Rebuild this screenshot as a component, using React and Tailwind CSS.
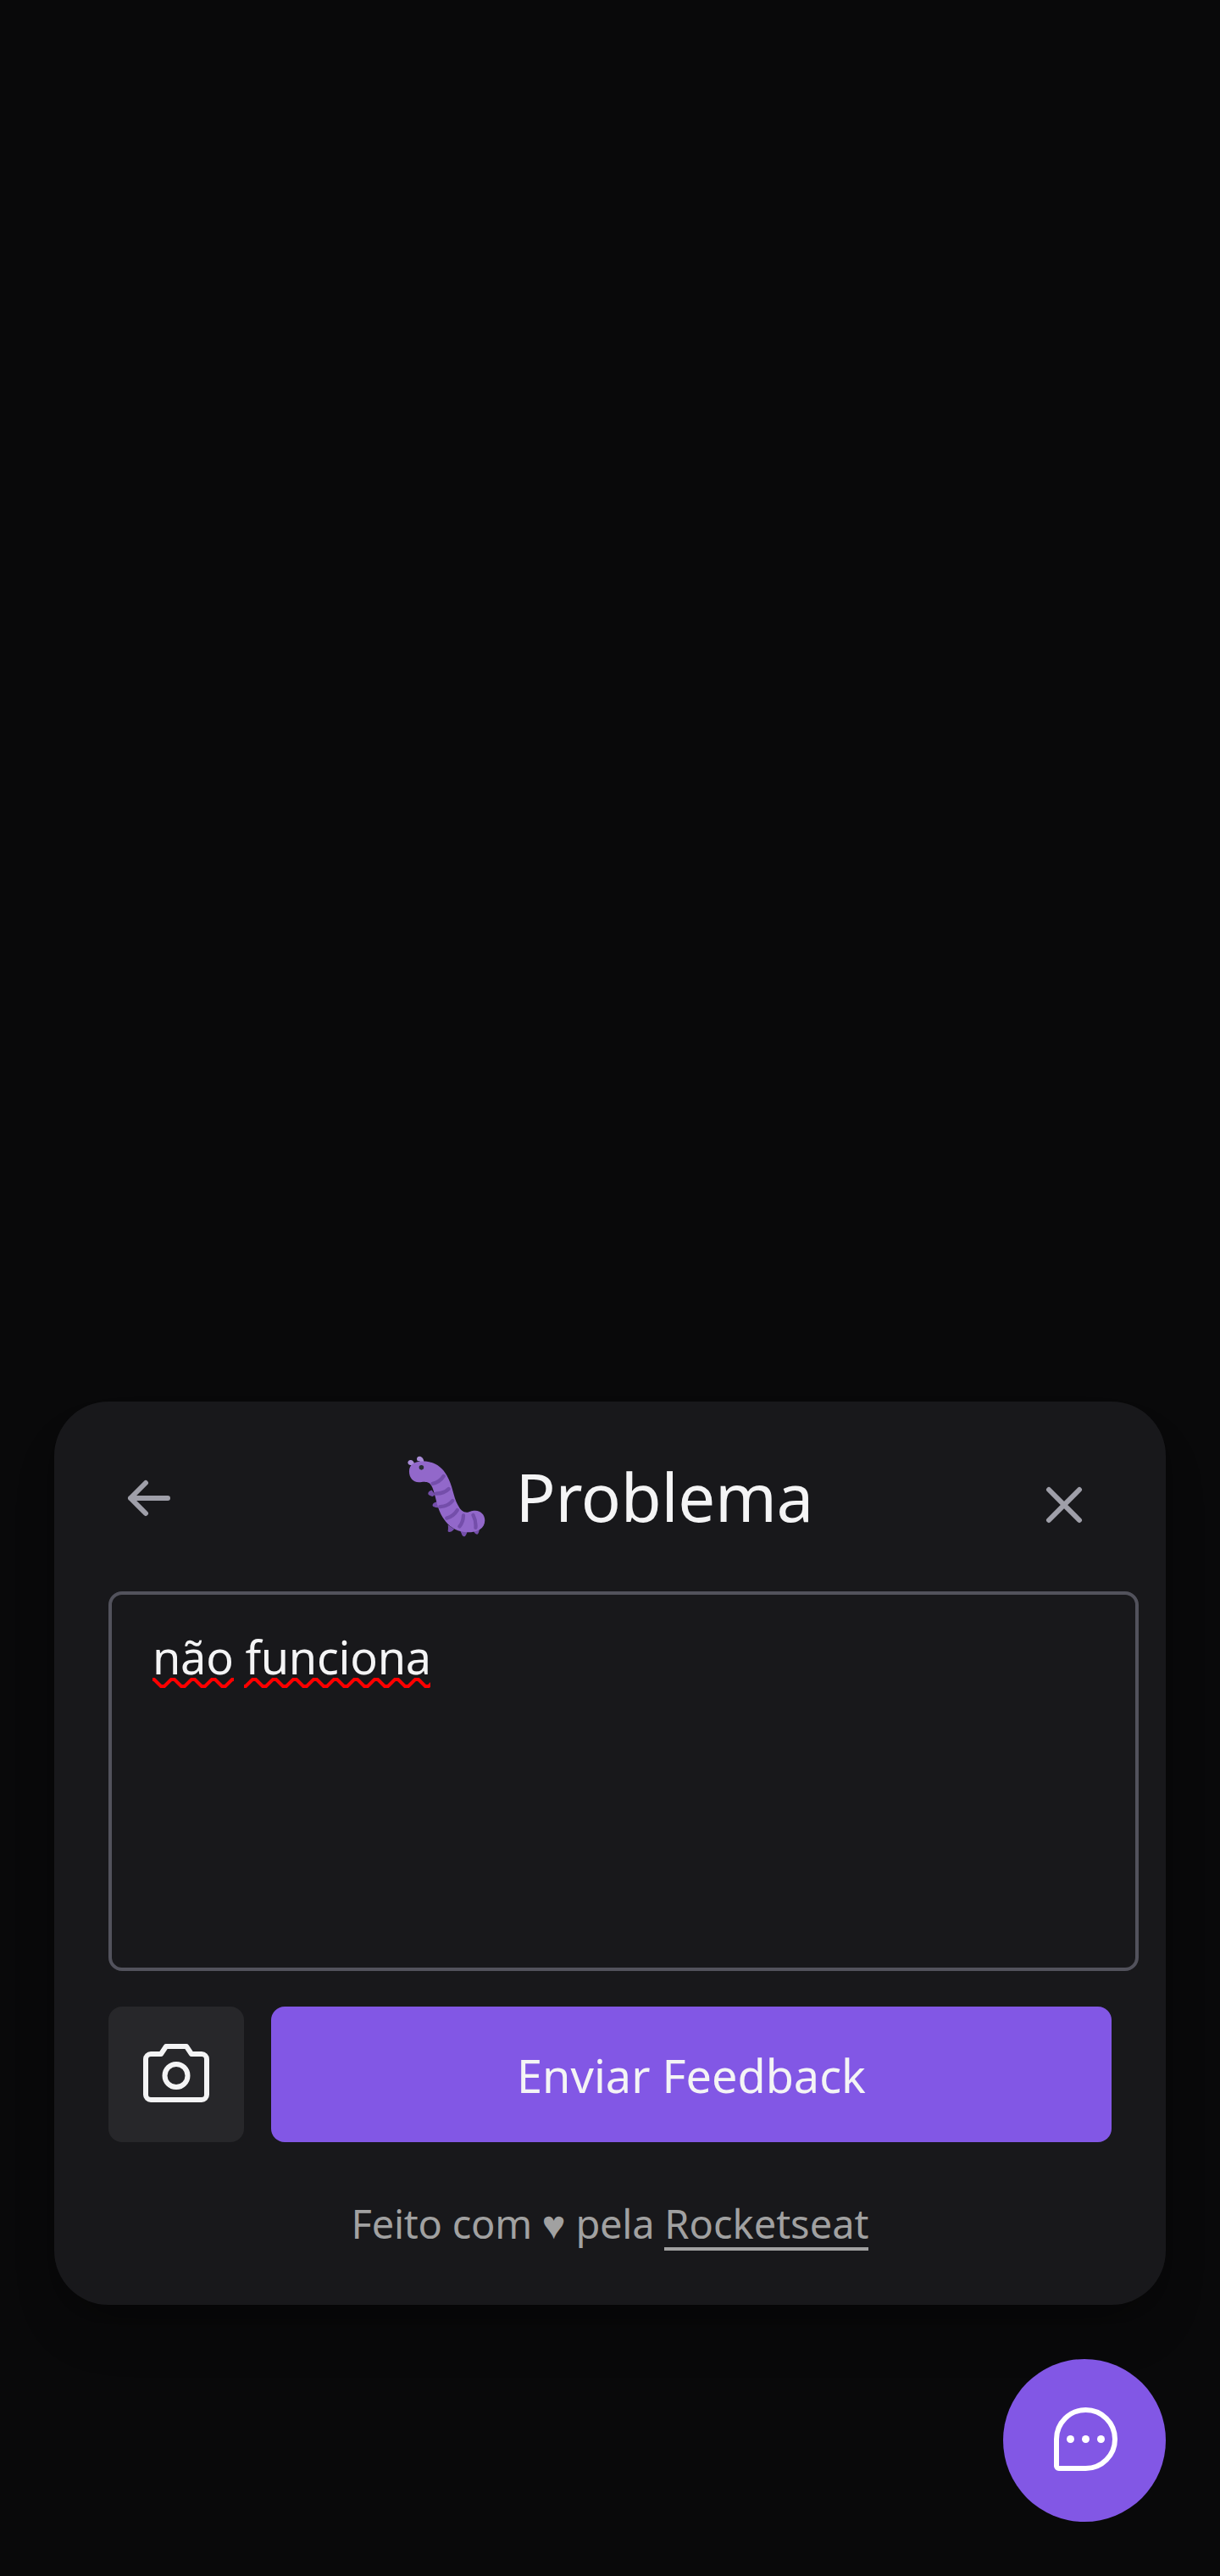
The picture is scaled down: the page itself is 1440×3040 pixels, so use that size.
import React from "react";

function ArrowLeft() {
  return (
    <svg viewBox="0 0 256 256" className="size-16 fill-none stroke-zinc-400" strokeWidth="24" strokeLinecap="round" strokeLinejoin="round">
      <path d="M216 128H40M112 56L40 128L112 200" />
    </svg>
  );
}

function Close() {
  return (
    <svg viewBox="0 0 256 256" className="size-16 fill-none stroke-zinc-400" strokeWidth="24" strokeLinecap="round" strokeLinejoin="round">
      <path d="M200 56L56 200M200 200L56 56" />
    </svg>
  );
}

function Camera() {
  return (
    <svg viewBox="0 0 256 256" className="size-24 fill-none stroke-zinc-100" strokeWidth="16" strokeLinecap="round" strokeLinejoin="round">
      <path d="M208 208H48a16 16 0 0 1-16-16V80a16 16 0 0 1 16-16H80L96 40h64l16 24h32a16 16 0 0 1 16 16V192a16 16 0 0 1-16 16Z" />
      <circle cx="128" cy="132" r="36" />
    </svg>
  );
}

function ChatDots() {
  return (
    <svg viewBox="0 0 256 256" className="size-24">
      <path
        d="M132 216H47.7a7.6 7.6 0 0 1-7.7-7.7V124a92 92 0 0 1 184 0a92 92 0 0 1-92 92Z"
        fill="none" stroke="#fff" strokeWidth="16" strokeLinecap="round" strokeLinejoin="round"
      />
      <g fill="#fff">
        <circle cx="84" cy="124" r="12" />
        <circle cx="132" cy="124" r="12" />
        <circle cx="180" cy="124" r="12" />
      </g>
    </svg>
  );
}

function Bug() {
  return (
    <svg viewBox="60 84 288 288" className="size-24">
      <g fill="#744EAA">
        <path d="M150 205c-7 2-13 7-13 12c0 6 8 9 17 11l8-7zM168 247c-8 2-15 7-15 12c0 6 8 7 18 10l6-8zM208 330c2 8 1 17 0 23c3 5 14 3 23-8zM252 350c5 9 7 22 14 22s9-10 13-20zM300 352c4 6 7 12 13 12s7-10 9-20z" />
      </g>
      <g fill="#AA8DD8">
        <path d="M97 96c-2-6 2-12 9-12c8 0 15 7 17 22l-14 2c-1-5-1-8-5-7c-4 0-6-2-7-5z" />
        <path d="M64 107c0-6 4-10 10-10c7 0 12 5 14 14l-8 10c-1-5-2-6-6-6c-5 0-9-3-10-8z" />
      </g>
      <path
        fill="#9268CA"
        d="M69 138C69 114 88 102 118 102C158 101 186 121 204 152C226 190 227 227 243 257C251 272 259 285 276 285C285 285 291 279 307 279C327 279 341 295 341 314C341 343 314 357 279 357C246 357 218 341 200 318C170 282 167 237 157 209C151 190 145 176 128 176C120 174 114 177 104 177C82 177 69 159 69 138Z"
      />
      <g fill="none" stroke="#744EAA" strokeWidth="13" strokeLinecap="round">
        <path d="M153 182Q178 177 193 155M166 218Q195 217 211 201M180 265Q210 263 225 243M204 306Q229 299 242 277M264 296Q263 320 250 336M299 295Q310 316 308 340" />
      </g>
      <circle cx="113" cy="124" r="8.5" fill="#292F33" />
    </svg>
  );
}

function Squiggle() {
  return (
    <svg viewBox="0 0 328 12" className="absolute left-0 top-[73px] h-3 w-[328px] fill-none stroke-[#f00]" strokeWidth="4">
      <defs>
        <pattern id="wave" width="24" height="12" patternUnits="userSpaceOnUse">
          <path d="M-4 2H2L10 10H14L22 2H28" />
        </pattern>
      </defs>
      <path d="M0 0H96V12H0ZM108 0H328V12H108Z" fill="url(#wave)" stroke="none" />
    </svg>
  );
}

export default function App() {
  return (
    <div className="flex min-h-[3040px] flex-col items-end justify-end gap-16 bg-[#09090a] p-16 font-['Noto_Sans',sans-serif] text-zinc-100">
      <div className="h-[1066px] w-full rounded-[64px] bg-zinc-900 p-16 shadow-[0_40px_60px_-12px_rgb(0_0_0/0.2),0_16px_24px_-16px_rgb(0_0_0/0.2)]">
        <header className="flex h-24 items-center justify-between">
          <button className="mt-1 ml-4"><ArrowLeft /></button>
          <div className="ml-2 flex h-24 w-[480px] items-center gap-[34px]">
            <Bug />
            <h1 className="whitespace-nowrap text-[78px] leading-[96px] tracking-[-0.3px]">Problema</h1>
          </div>
          <button className="mt-5 mr-6"><Close /></button>
        </header>
        <div className="mt-16 h-[448px] w-[1216px] rounded-2xl border-4 border-zinc-600 px-12 pt-[25px]">
          <p className="relative whitespace-nowrap text-[54px] leading-[96px] tracking-[-0.25px]">
            não funciona
            <Squiggle />
          </p>
        </div>
        <div className="mt-[42px] flex gap-8">
          <button className="flex size-40 items-center justify-center rounded-2xl bg-zinc-800"><Camera /></button>
          <button className="h-40 flex-1 rounded-2xl bg-[#8257e5] pt-0.5 text-[54px] leading-[80px]">Enviar Feedback</button>
        </div>
        <footer className="mt-16 flex justify-center whitespace-pre text-[47px] leading-[64px] tracking-[-0.25px] text-neutral-400">
          Feito com ♥ pela <a className="h-16 border-b-4 border-neutral-400 tracking-normal">Rocketseat</a>
        </footer>
      </div>
      <button className="flex size-48 items-center justify-center rounded-full bg-[#8257e5]"><ChatDots /></button>
    </div>
  );
}
